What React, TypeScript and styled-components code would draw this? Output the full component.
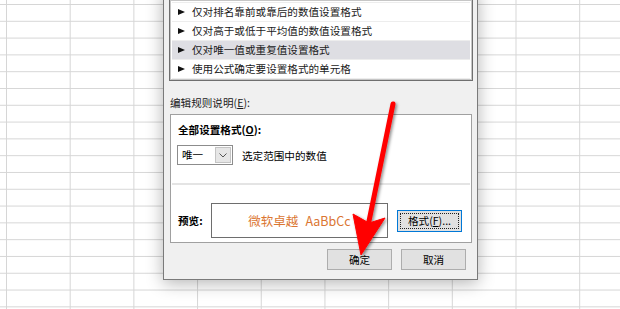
import React from 'react';
import styled, { createGlobalStyle } from 'styled-components';

const GlobalStyle = createGlobalStyle`
  html, body {
    margin: 0;
    padding: 0;
  }

  body {
    font-family: "Noto Sans CJK SC", "Liberation Sans", sans-serif;
    color: #000;
  }
`;

const Sheet = styled.div`
  position: relative;
  width: 620px;
  height: 309px;
  overflow: hidden;
  background-color: #fff;
  background-image:
    linear-gradient(to right, #d6d6d6 1px, transparent 1px),
    linear-gradient(to bottom, #d6d6d6 1px, transparent 1px);
  background-size: 63.7px 16.8px;
  background-position: 6px 4px;
`;

const Dialog = styled.div`
  box-sizing: border-box;
  width: 315px;
  margin: -10px 0 0 163px;
  padding: 8px 5px 9px 6px;
  display: flex;
  flex-direction: column;
  background: #f0f0f0;
  border: 1px solid #7a7a7a;
  box-shadow: 0 3px 16px rgba(0, 0, 0, 0.3);
`;

const ListBox = styled.ul`
  list-style: none;
  margin: 0 -1px;
  padding: 2px 2px 1px;
  background: #fff;
  border: 1px solid #6f6f6f;
  box-shadow: inset 0 0 0 1px #c6c6c6;
`;

const RuleRow = styled.li<{ $selected?: boolean }>`
  display: flex;
  align-items: center;
  gap: 7px;
  height: 18px;
  padding-left: 6px;
  border-bottom: 1px solid #ededed;
  background: ${p => (p.$selected ? '#dedee3' : '#fff')};
  font-size: 10.6px;
  line-height: 18px;
  color: #1a1a1a;
  white-space: nowrap;

  &:first-child {
    border-top: 1px solid #ededed;
  }
`;

const Bullet = styled.span`
  width: 0;
  height: 0;
  border-left: 7px solid #111;
  border-top: 3.5px solid transparent;
  border-bottom: 3.5px solid transparent;
`;

const SectionLabel = styled.div`
  margin-top: 15px;
  font-size: 10.6px;
  line-height: 14px;
  color: #1a1a1a;
`;

const Key = styled.span`
  text-decoration: underline;
  text-underline-offset: 1px;
`;

const Panel = styled.div`
  margin-top: 4px;
  padding: 8px 0 4px;
  background: #fff;
  border: 1px solid #a0a0a0;
  display: flex;
  flex-direction: column;
`;

const PanelTitle = styled.div`
  padding-left: 7px;
  font-size: 10.6px;
  font-weight: 700;
  line-height: 14px;
`;

const ValueRow = styled.div`
  display: flex;
  align-items: center;
  gap: 9px;
  margin-top: 8px;
  padding-left: 6px;
  font-size: 10.6px;
`;

const Select = styled.div`
  box-sizing: border-box;
  width: 56px;
  height: 20px;
  display: flex;
  align-items: stretch;
  justify-content: space-between;
  padding: 1px;
  border: 1px solid #8c8c8c;
  background: #fff;
`;

const SelectText = styled.span`
  padding-left: 3px;
  font-size: 10.6px;
  line-height: 16px;
`;

const SelectButton = styled.span`
  box-sizing: border-box;
  width: 16px;
  display: flex;
  align-items: center;
  justify-content: center;
  background: #e6e6e6;
  border: 1px solid #c4c4c4;
`;

const Divider = styled.div`
  height: 2px;
  margin: 18px 1px 0;
  background: #e4e4e4;
`;

const PreviewRow = styled.div`
  display: flex;
  align-items: center;
  margin-top: 18px;
  padding-left: 7px;
`;

const PreviewLabel = styled.span`
  width: 33px;
  font-size: 10.6px;
  font-weight: 700;
  line-height: 14px;
`;

const PreviewBox = styled.div`
  box-sizing: border-box;
  width: 177px;
  height: 35px;
  display: flex;
  align-items: center;
  justify-content: center;
  gap: 7px;
  border: 1px solid #6e6e6e;
  color: #db7632;
  font-size: 12.5px;
`;

const Button = styled.button<{ $focused?: boolean }>`
  box-sizing: border-box;
  width: 65px;
  height: ${p => (p.$focused ? '22px' : '21px')};
  margin: 0;
  padding: 0;
  font-family: inherit;
  font-size: 10.6px;
  color: #000;
  background: #e1e1e1;
  border: 1px solid ${p => (p.$focused ? '#0078d7' : '#adadad')};
  outline: ${p => (p.$focused ? '1px dotted #222' : 'none')};
  outline-offset: -4px;
`;

const FormatButton = styled(Button)`
  margin-left: 9px;
`;

const Footer = styled.div`
  display: flex;
  justify-content: flex-end;
  gap: 9px;
  margin-top: 6px;
  padding-right: 6px;
`;

const Overlay = styled.svg`
  position: absolute;
  left: 0;
  top: 0;
  pointer-events: none;
`;

const rules = [
  '仅对排名靠前或靠后的数值设置格式',
  '仅对高于或低于平均值的数值设置格式',
  '仅对唯一值或重复值设置格式',
  '使用公式确定要设置格式的单元格',
];

function RedArrow() {
  return (
    <Overlay width="620" height="309" viewBox="0 0 620 309">
      <defs>
        <filter id="arrowShadow" x="-50%" y="-20%" width="200%" height="140%">
          <feDropShadow dx="1.5" dy="1.5" stdDeviation="1.5" floodColor="#000" floodOpacity="0.45"/>
        </filter>
      </defs>
      <g filter="url(#arrowShadow)" fill="#ff0000" stroke="#ff0000">
        <line x1="393" y1="104" x2="368" y2="226" strokeWidth="5" strokeLinecap="round"/>
        <polygon points="353,214 369,223 385,218 361,255" strokeWidth="1" strokeLinejoin="round"/>
      </g>
    </Overlay>
  );
}

export default function App() {
  return (
    <Sheet>
      <GlobalStyle/>
      <Dialog>
        <ListBox>
          {rules.map((rule, i) => (
            <RuleRow key={i} $selected={i === 2}>
              <Bullet/>
              {rule}
            </RuleRow>
          ))}
        </ListBox>

        <SectionLabel>编辑规则说明(<Key>E</Key>):</SectionLabel>

        <Panel>
          <PanelTitle>全部设置格式(<Key>O</Key>):</PanelTitle>
          <ValueRow>
            <Select>
              <SelectText>唯一</SelectText>
              <SelectButton>
                <svg width="8" height="5" viewBox="0 0 8 5">
                  <path d="M0.5 0.5 L4 4 L7.5 0.5" fill="none" stroke="#555" strokeWidth="1"/>
                </svg>
              </SelectButton>
            </Select>
            <span>选定范围中的数值</span>
          </ValueRow>
          <Divider/>
          <PreviewRow>
            <PreviewLabel>预览:</PreviewLabel>
            <PreviewBox>
              <span>微软卓越</span>
              <span>AaBbCc</span>
            </PreviewBox>
            <FormatButton $focused>格式(<Key>F</Key>)...</FormatButton>
          </PreviewRow>
        </Panel>

        <Footer>
          <Button>确定</Button>
          <Button>取消</Button>
        </Footer>
      </Dialog>
      <RedArrow/>
    </Sheet>
  );
}
